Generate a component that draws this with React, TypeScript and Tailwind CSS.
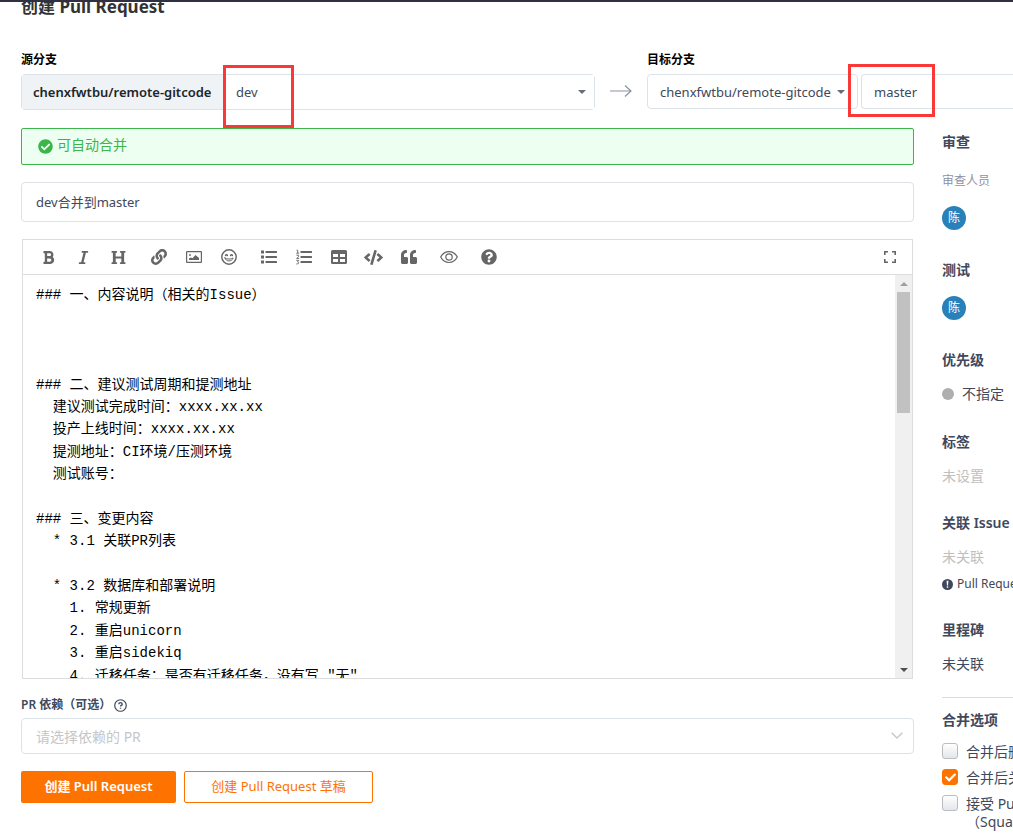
import type { ReactNode } from "react"
import { FaBold, FaCheck, FaCheckCircle, FaCode, FaHeading, FaItalic, FaLink, FaQuestionCircle, FaQuoteLeft } from "react-icons/fa"

const DESCRIPTION = `### 一、内容说明（相关的Issue）



### 二、建议测试周期和提测地址
  建议测试完成时间：xxxx.xx.xx
  投产上线时间：xxxx.xx.xx
  提测地址：CI环境/压测环境
  测试账号：

### 三、变更内容
  * 3.1 关联PR列表

  * 3.2 数据库和部署说明
    1. 常规更新
    2. 重启unicorn
    3. 重启sidekiq
    4. 迁移任务：是否有迁移任务，没有写 "无"`

const ImageIcon = () => (
	<svg viewBox="0 0 16 16" className="h-4 w-4" fill="currentColor">
		<path fillRule="evenodd" d="M1 2h14a1 1 0 0 1 1 1v10a1 1 0 0 1-1 1H1a1 1 0 0 1-1-1V3a1 1 0 0 1 1-1Zm.2 1.200v9.600h13.600V3.200Z" />
		<circle cx="4" cy="6" r="0.900" />
		<path d="M3 11V9.500l1.800-1 1.700.8L9.500 6l3.500 3v2Z" />
	</svg>
)

const SmileIcon = () => (
	<svg viewBox="0 0 16 16" className="h-4 w-4" fill="none" stroke="currentColor" strokeWidth="1.400" strokeLinecap="round">
		<circle cx="8" cy="8" r="7.200" />
		<path d="M4.600 6.500c.3-1 1.500-1 1.800 0M9.600 6.500c.3-1 1.500-1 1.800 0" />
		<path d="M3.900 9c1 4 7.200 4 8.200 0-2 1.500-6.200 1.500-8.200 0Z" strokeWidth="1" strokeLinejoin="round" />
	</svg>
)

const ListIcon = () => (
	<svg viewBox="0 0 16 16" className="h-4 w-4" fill="currentColor">
		<path d="M0 1.500h3v3H0zM0 6.500h3v3H0zM0 11.500h3v3H0z" />
		<rect x="4.500" y="2" width="11.500" height="2" rx="0.600" />
		<rect x="4.500" y="7" width="11.500" height="2" rx="0.600" />
		<rect x="4.500" y="12" width="11.500" height="2" rx="0.600" />
	</svg>
)

const OrderedListIcon = () => (
	<svg viewBox="0 0 16 16" className="h-4 w-4" fill="currentColor">
		<rect x="4.500" y="2" width="11.500" height="2" rx="0.600" />
		<rect x="4.500" y="7" width="11.500" height="2" rx="0.600" />
		<rect x="4.500" y="12" width="11.500" height="2" rx="0.600" />
		<path
			fill="none"
			stroke="currentColor"
			strokeWidth="0.900"
			d="M.5 1.200h1.200v3M.3 4.200h2.800M.4 6.200h2.200v1.500L.6 9.500h2.500M.4 11.400h2.300l-1.200 1.500c1.600 0 1.600 2-.1 2H.3"
		/>
	</svg>
)

const TableIcon = () => (
	<svg viewBox="0 0 16 16" className="h-4 w-4" fill="currentColor">
		<path
			fillRule="evenodd"
			d="M1.500 1h13A1.500 1.500 0 0 1 16 2.500v11a1.500 1.500 0 0 1-1.500 1.500h-13A1.500 1.500 0 0 1 0 13.500v-11A1.500 1.500 0 0 1 1.500 1ZM2 5v3h5V5Zm7 0v3h5V5ZM2 10v3h5v-3Zm7 0v3h5v-3Z"
		/>
	</svg>
)

const EyeIcon = () => (
	<svg viewBox="0 0 18 16" className="h-4 w-[18px]" fill="none" stroke="currentColor" strokeWidth="1.200">
		<path d="M.7 8C4.500.7 13.500.7 17.300 8 13.500 15.300 4.500 15.300.7 8Z" />
		<circle cx="9" cy="8" r="3.200" />
	</svg>
)

const FullscreenIcon = () => (
	<svg viewBox="0 0 14 14" className="h-3.5 w-3.5" fill="none" stroke="currentColor" strokeWidth="1.600">
		<path d="M1.800 5V1.800H5M9 1.800h3.200V5M12.200 9v3.200H9M5 12.200H1.800V9" />
	</svg>
)

const Caret = ({ className = "" }: { className?: string }) => (
	<svg viewBox="0 0 8 4" className={`h-1 w-2 ${className}`} fill="currentColor">
		<path d="M0 0h8L4 4Z" />
	</svg>
)

const toolbar = [
	[
		{ label: "粗体", icon: <FaBold size={15} /> },
		{ label: "斜体", icon: <FaItalic size={15} /> },
		{ label: "标题", icon: <FaHeading size={15} /> },
	],
	[
		{ label: "链接", icon: <FaLink size={16} /> },
		{ label: "图片", icon: <ImageIcon /> },
		{ label: "表情", icon: <SmileIcon /> },
	],
	[
		{ label: "无序列表", icon: <ListIcon /> },
		{ label: "有序列表", icon: <OrderedListIcon /> },
		{ label: "表格", icon: <TableIcon /> },
		{ label: "代码", icon: <FaCode size={19} /> },
		{ label: "引用", icon: <FaQuoteLeft size={16} /> },
	],
	[{ label: "预览", icon: <EyeIcon /> }],
	[{ label: "帮助", icon: <FaQuestionCircle size={16} /> }],
]

const ToolButton = ({ label, children }: { label: string; children: ReactNode }) => (
	<button type="button" aria-label={label} className="flex h-[34px] w-[35px] items-center justify-center">
		{children}
	</button>
)

const Editor = () => (
	<div className="mx-px mt-[17px] border border-[#ddd]">
		<div className="flex h-[35px] items-center border-b border-[#ddd] pl-2 pr-[5px] text-[#666]">
			<div className="flex flex-1 gap-[5px]">
				{toolbar.map((group, i) => (
					<div key={i} className="flex">
						{group.map(({ label, icon }) => (
							<ToolButton key={label} label={label}>
								{icon}
							</ToolButton>
						))}
					</div>
				))}
			</div>
			<ToolButton label="全屏">
				<FullscreenIcon />
			</ToolButton>
		</div>
		<div className="flex h-[403px]">
			<textarea
				aria-label="描述"
				defaultValue={DESCRIPTION}
				wrap="off"
				className="block min-w-0 flex-1 resize-none overflow-hidden pt-[9px] pl-[13px] font-['Liberation_Mono','Noto_Sans_CJK_SC',monospace] text-sm leading-[1.6] text-black outline-none"
			/>
			<div className="flex w-[17px] flex-col items-center bg-[#f0f0f0] px-0.5 text-[#505050]">
				<div className="flex h-[17px] items-center">
					<Caret className="rotate-180 text-[#a0a0a0]" />
				</div>
				<div className="h-[121px] w-[13px] bg-[#c1c1c1]" />
				<div className="mt-auto flex h-[17px] items-center">
					<Caret />
				</div>
			</div>
		</div>
	</div>
)

const SourceBranch = () => (
	<div className="min-w-0 flex-1">
		<label htmlFor="source-branch" className="block text-xs leading-5 font-bold text-black">
			源分支
		</label>
		<div className="relative mt-1 flex h-9 rounded-sm border border-[#dce3e8] text-[13px]">
			<span className="flex w-[203px] items-center bg-[#eff3f6] pt-0.5 pl-[11px] font-semibold text-[#212529]">
				chenxfwtbu/remote-gitcode
			</span>
			<select id="source-branch" className="flex-1 appearance-none bg-white pt-0.5 pl-[11px] text-[#40485b]">
				<option>dev</option>
			</select>
			<Caret className="absolute top-[15px] right-2 text-[#666d7a]" />
			<div className="absolute -top-2.5 left-[201px] h-[63px] w-[71px] border-3 border-[#fb3838]" />
		</div>
	</div>
)

const TargetBranch = () => (
	<div className="w-[366px]">
		<label htmlFor="target-branch" className="block text-xs leading-5 font-bold text-black">
			目标分支
		</label>
		<div className="relative mt-1 flex h-[35px] gap-[3px] text-[13px] text-[#40485b]">
			<button
				type="button"
				className="flex w-[211px] items-center gap-1.5 rounded-sm border border-[#dce3e8] pl-3 whitespace-nowrap"
			>
				<span className="pt-0.5">chenxfwtbu/remote-gitcode</span>
				<Caret className="shrink-0 text-[#666d7a]" />
			</button>
			<select
				id="target-branch"
				className="flex-1 appearance-none rounded-l-sm border border-r-0 border-[#dce3e8] bg-white pt-0.5 pl-3"
			>
				<option>master</option>
			</select>
			<div className="absolute -top-2.5 left-[201px] h-[53px] w-[87px] border-3 border-[#fb3838]" />
		</div>
	</div>
)

const SideTitle = ({ children }: { children: ReactNode }) => (
	<h2 className="text-sm leading-5 font-semibold text-[#40485b]">{children}</h2>
)

const Avatar = () => (
	<span className="flex h-6 w-6 items-center justify-center rounded-full bg-[#2a80b9] text-xs text-white">陈</span>
)

const MergeOption = ({ checked = false, children }: { checked?: boolean; children: ReactNode }) => (
	<label className="flex gap-2 text-sm leading-[18px]">
		<span className="grid h-4 w-4 shrink-0">
			<input
				type="checkbox"
				defaultChecked={checked}
				className="col-start-1 row-start-1 h-4 w-4 appearance-none rounded-[3px] border border-[#b9bcc3] bg-linear-to-b from-white to-[#e4e6ea] checked:border-[#fe7300] checked:from-[#fe7300] checked:to-[#fe7300]"
			/>
			{checked && <FaCheck size={11} className="col-start-1 row-start-1 place-self-center text-white" />}
		</span>
		<span>{children}</span>
	</label>
)

const Sidebar = () => (
	<aside className="w-[71px] shrink-0 overflow-hidden pt-1 text-sm leading-5 whitespace-nowrap text-[#40485b]">
		<SideTitle>审查</SideTitle>
		<p className="mt-[19px] text-xs leading-5 text-[#8c92a4]">审查人员</p>
		<div className="mt-[15px]">
			<Avatar />
		</div>
		<div className="mt-[30px]">
			<SideTitle>测试</SideTitle>
		</div>
		<div className="mt-4">
			<Avatar />
		</div>
		<div className="mt-[30px]">
			<SideTitle>优先级</SideTitle>
		</div>
		<p className="mt-3.5 flex items-center gap-2">
			<span className="h-3 w-3 rounded-full bg-[#afafaf]" />
			不指定
		</p>
		<div className="mt-7">
			<SideTitle>标签</SideTitle>
		</div>
		<p className="mt-3.5 text-[#c0c0c0]">未设置</p>
		<div className="mt-[27px]">
			<SideTitle>关联 Issue</SideTitle>
		</div>
		<p className="mt-3.5 text-[#c0c0c0]">未关联</p>
		<p className="mt-[7px] flex items-center gap-1 text-xs leading-5">
			<svg viewBox="0 0 12 12" className="h-[11px] w-[11px] shrink-0">
				<circle cx="6" cy="6" r="6" fill="#40485b" />
				<path d="M5 2h2l-.4 5H5.400ZM5.200 8h1.600v1.600H5.200Z" fill="#fff" />
			</svg>
			Pull Request
		</p>
		<div className="mt-[26px]">
			<SideTitle>里程碑</SideTitle>
		</div>
		<p className="mt-3.5">未关联</p>
		<div className="mt-[23px] border-t border-[#dcdddf] pt-3">
			<SideTitle>合并选项</SideTitle>
		</div>
		<div className="mt-[13px] flex flex-col gap-2">
			<MergeOption>合并后删除提交分支</MergeOption>
			<MergeOption checked>合并后关闭提到的 Issue</MergeOption>
			<MergeOption>
				接受 Pull Request 时使用扁平化
				<br />
				（Squash）合并
			</MergeOption>
		</div>
	</aside>
)

export default function CreatePullRequest() {
	return (
		<div className="overflow-hidden border-t-2 border-[#2f3142] bg-white font-['Noto_Sans','Noto_Sans_CJK_SC',sans-serif] text-[#40485b]">
			<div className="overflow-hidden pl-[21px]">
				<h1 className="-mt-[9px] text-[17px] leading-7 font-bold text-[#333]">创建 Pull Request</h1>
			</div>

			<div className="mt-[29px] flex pl-[21px]">
				<SourceBranch />
				<svg viewBox="0 0 22 12" className="mx-[15px] mt-[35px] h-3 w-[22px] shrink-0" fill="none" stroke="#8c92a4" strokeWidth="1.200">
					<path d="M0 6h21M15 .5 21 6l-6 5.500" />
				</svg>
				<TargetBranch />
			</div>

			<div className="mt-[18px] flex gap-7 pl-[21px]">
				<main className="min-w-0 flex-1">
					<div className="flex h-[37px] items-center gap-1 rounded-xs border border-[#3cb54a] bg-[#edfff0] pl-4 text-sm text-[#3cb54a]">
						<FaCheckCircle size={15} />
						<span className="pb-[3px]">可自动合并</span>
					</div>

					<input
						aria-label="标题"
						defaultValue="dev合并到master"
						className="mt-[17px] block h-10 w-full rounded-sm border border-[#dfe1e6] px-3.5 pb-0.5 text-[13px] text-[#40485b]"
					/>

					<Editor />

					<label htmlFor="pr-deps" className="mt-4 flex h-5 items-center gap-[3px] text-xs font-semibold">
						PR 依赖（可选）
						<svg viewBox="0 0 14 14" className="h-[13px] w-[13px]" fill="none" stroke="currentColor" strokeWidth="1.300">
							<circle cx="7" cy="7" r="6.200" />
							<path d="M5.200 5.600c0-2.200 3.600-2.200 3.600 0 0 1.300-1.800 1.300-1.800 2.600M7 9.300v1.300" strokeWidth="1.500" />
						</svg>
					</label>
					<div className="relative mt-[3px]">
						<input
							id="pr-deps"
							placeholder="请选择依赖的 PR"
							className="block h-9 w-full rounded-sm border border-[#dce3e8] px-3.5 text-sm placeholder:text-[#c4c6ca]"
						/>
						<svg viewBox="0 0 12 7" className="absolute top-3.5 right-[11px] h-[7px] w-3" fill="none" stroke="#c4c6ca" strokeWidth="1.300">
							<path d="m.7.7 5.300 5.300L11.300.7" />
						</svg>
					</div>

					<div className="mt-[17px] flex gap-2 text-[13px]">
						<button type="button" className="h-8 w-[155px] rounded-xs bg-[#fe7300] font-semibold text-white">
							创建 Pull Request
						</button>
						<button type="button" className="h-8 w-[189px] rounded-xs border border-[#fe7300] bg-white text-[#fe7300]">
							创建 Pull Request 草稿
						</button>
					</div>
				</main>
				<Sidebar />
			</div>
		</div>
	)
}
